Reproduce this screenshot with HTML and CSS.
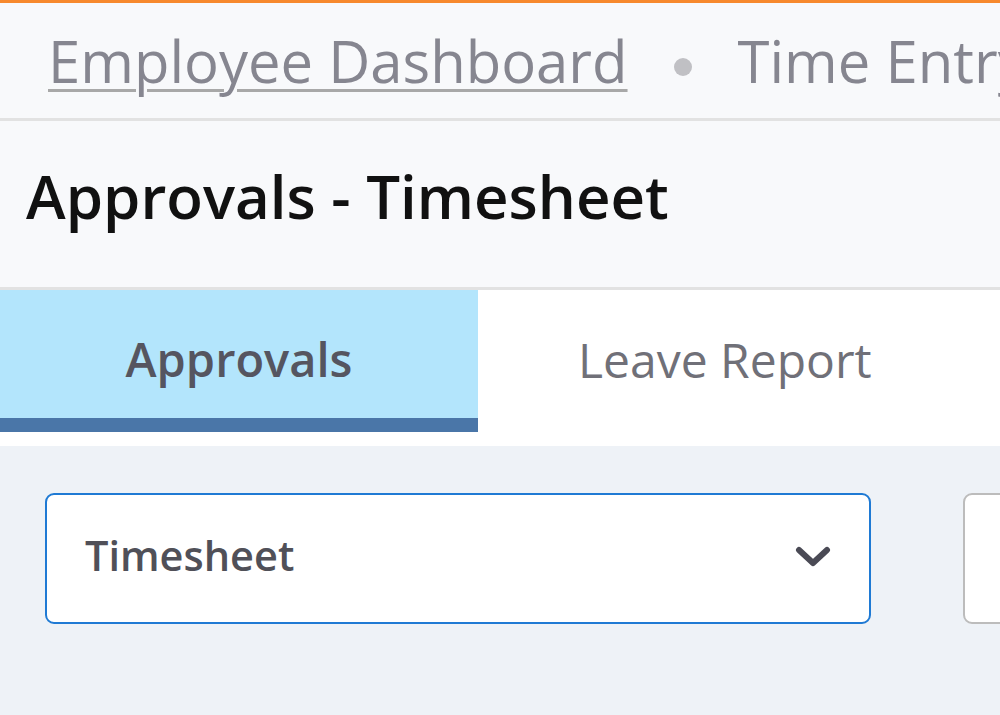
FILE: index.html
```html
<!DOCTYPE html>
<html>
<head>
<meta charset="utf-8">
<link rel="stylesheet" href="styles.css">
</head>
<body>
<div class="page">
  <div class="crumbs">
    <a class="crumb-link" href="#">Employee Dashboard</a>
    <span class="crumb-dot"></span>
    <span class="crumb-current">Time Entry</span>
  </div>
  <div class="title-bar">
    <h1 class="title">Approvals - Timesheet</h1>
  </div>
  <div class="tabs">
    <div class="tab tab-active">Approvals</div>
    <div class="tab">Leave Report</div>
  </div>
  <div class="content">
    <div class="select select-focus">
      <span class="select-text">Timesheet</span>
      <svg class="chevron" width="36" height="24" viewBox="0 0 36 24"><path d="M4 5 L18 18 L32 5" fill="none" stroke="#4a4a55" stroke-width="6" stroke-linecap="round" stroke-linejoin="round"/></svg>
    </div>
    <div class="select select-plain"></div>
  </div>
</div>
</body>
</html>
```
FILE: styles.css
```css
html, body {
  margin: 0;
  padding: 0;
}
body {
  width: 1000px;
  height: 715px;
  overflow: hidden;
  font-family: "Open Sans", "Liberation Sans", sans-serif;
  background: #eef2f7;
}
.page {
  display: flex;
  flex-direction: column;
  border-top: 3px solid #f7892d;
}
.crumbs {
  height: 115px;
  background: #f8f9fb;
  display: flex;
  align-items: center;
  padding-left: 48px;
  white-space: nowrap;
  overflow: hidden;
  border-bottom: 3px solid #e2e2e2;
  font-size: 58px;
  color: #868690;
}
.crumb-link {
  color: #868690;
  text-decoration: underline;
  text-decoration-color: #a8a8a8;
  text-decoration-thickness: 3px;
  text-underline-offset: 6px;
}
.crumb-dot {
  width: 18px;
  height: 18px;
  border-radius: 50%;
  background: #c0c0c4;
  margin: 12px 46px 0 46px;
  flex: none;
}
.crumb-current {
  color: #868690;
}
.title-bar {
  height: 169px;
  background: #f8f9fb;
  display: flex;
  align-items: center;
  padding-left: 26px;
  padding-bottom: 16px;
  box-sizing: border-box;
  border-bottom: 3px solid #e2e2e2;
}
.title {
  margin: 0;
  font-size: 60px;
  font-weight: 600;
  color: #111;
}
.tabs {
  display: flex;
  background: #fff;
  height: 156px;
}
.tab {
  width: 478px;
  height: 128px;
  padding-top: 10px;
  box-sizing: border-box;
  display: flex;
  align-items: center;
  justify-content: center;
  font-size: 48px;
  color: #707078;
}
.tab-active {
  height: 142px;
  background: #b3e5fc;
  color: #555560;
  font-weight: 600;
  font-size: 47px;
  border-bottom: 14px solid #4a76a8;
}
.tab + .tab {
  width: auto;
  padding-left: 100px;
  justify-content: flex-start;
}
.content {
  display: flex;
  gap: 92px;
  padding: 47px 0 0 45px;
}
.select {
  height: 131px;
  border-radius: 9px;
  background: #fff;
  box-sizing: border-box;
  display: flex;
  align-items: center;
  flex: none;
}
.select-focus {
  width: 826px;
  border: 2px solid #1f7ad4;
  padding: 0 38px 0 38px;
  justify-content: space-between;
}
.select-plain {
  width: 200px;
  border: 2px solid #bcbcbc;
}
.select-text {
  font-size: 41.5px;
  font-weight: 600;
  color: #505058;
  margin-top: -8px;
}
.chevron {
  margin-top: -4px;
}
```
